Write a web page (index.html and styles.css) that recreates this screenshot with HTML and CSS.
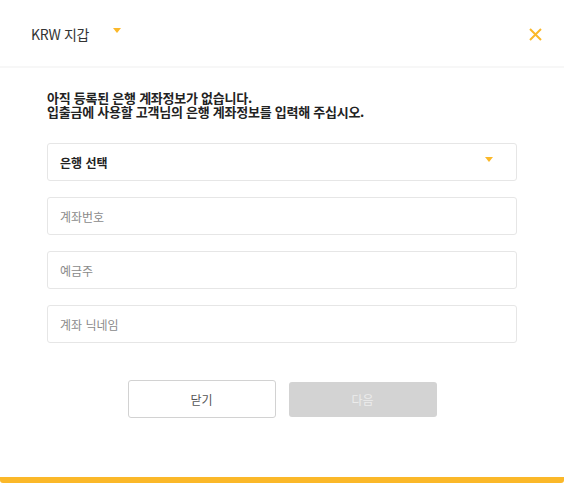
FILE: index.html
```html
<!DOCTYPE html>
<html lang="ko">
<head>
<meta charset="UTF-8">
<meta name="viewport" content="width=device-width, initial-scale=1.0">
<link rel="stylesheet" href="styles.css">
</head>
<body>

<div class="modal">
  <div class="modal-head">
    <div class="wallet-select">
      <span class="wallet-name">KRW 지갑</span>
      <span class="caret"></span>
    </div>
    <button class="close-btn" aria-label="닫기">
      <svg width="13" height="13" viewBox="0 0 13 13">
        <path d="M1 1 L12 12 M12 1 L1 12" stroke="#fbb829" stroke-width="2" fill="none"/>
      </svg>
    </button>
  </div>

  <div class="modal-body">
    <p class="notice">
      <span class="notice-line">아직 등록된 은행 계좌정보가 없습니다.</span>
      <span class="notice-line">입출금에 사용할 고객님의 은행 계좌정보를 입력해 주십시오.</span>
    </p>

    <div class="form">
      <div class="field bank-select">
        <span>은행 선택</span>
        <span class="caret"></span>
      </div>
      <input class="field" type="text" placeholder="계좌번호">
      <input class="field" type="text" placeholder="예금주">
      <input class="field" type="text" placeholder="계좌 닉네임">
    </div>

    <div class="actions">
      <button class="btn btn-close">닫기</button>
      <button class="btn btn-next" disabled>다음</button>
    </div>
  </div>
</div>

</body>
</html>
```

FILE: styles.css
```css
body {
  margin: 0;
  background: #fff;
  font-family: "Noto Sans CJK KR", "Noto Sans", sans-serif;
  color: #222;
}

.modal {
  height: 477px;
  border-bottom: 6px solid #fbb829;
  border-radius: 0 0 3px 3px;
  background: #fff;
}

.modal-head {
  height: 66px;
  border-bottom: 2px solid #f7f7f7;
  display: flex;
  align-items: center;
  justify-content: space-between;
  padding: 0 22px 0 31px;
}

.wallet-select {
  display: flex;
  align-items: center;
  margin-top: 1px;
}

.wallet-name {
  width: 82px;
  font-size: 14px;
  color: #333;
  letter-spacing: -0.3px;
}

.caret {
  width: 0;
  height: 0;
  border-left: 4.5px solid transparent;
  border-right: 4.5px solid transparent;
  border-top: 5px solid #fbb829;
}

.wallet-select .caret {
  margin-top: -6px;
}

.close-btn {
  border: 0;
  background: none;
  padding: 0;
  width: 13px;
  height: 13px;
  display: flex;
  margin-top: 2px;
}

.modal-body {
  padding: 23px 47px 0;
}

.notice {
  margin: 0;
  font-size: 13px;
  line-height: 14px;
  font-weight: bold;
  color: #222;
  letter-spacing: -0.25px;
}

.notice-line {
  display: block;
}

.form {
  margin-top: 24px;
  display: flex;
  flex-direction: column;
  gap: 16px;
}

.field {
  box-sizing: border-box;
  height: 38px;
  width: 100%;
  border: 1px solid #e6e6e6;
  border-radius: 3px;
  padding: 0 12px;
  font-family: inherit;
  font-size: 12px;
  color: #333;
  background: #fff;
  outline: none;
}

.field::placeholder {
  color: #8a8a8a;
}

.bank-select {
  display: flex;
  align-items: center;
  justify-content: space-between;
  padding-right: 23px;
  font-weight: bold;
  color: #222;
}

.bank-select .caret {
  margin-top: -6px;
}

.actions {
  margin-top: 37px;
  display: flex;
  justify-content: center;
  align-items: center;
  gap: 13px;
}

.btn {
  box-sizing: border-box;
  width: 148px;
  border-radius: 3px;
  font-family: inherit;
  font-size: 12px;
}

.btn-close {
  height: 38px;
  background: #fff;
  border: 1px solid #d2d2d2;
  color: #555;
}

.btn-next {
  height: 35px;
  background: #d3d3d3;
  border: 0;
  color: #ececec;
}
```
